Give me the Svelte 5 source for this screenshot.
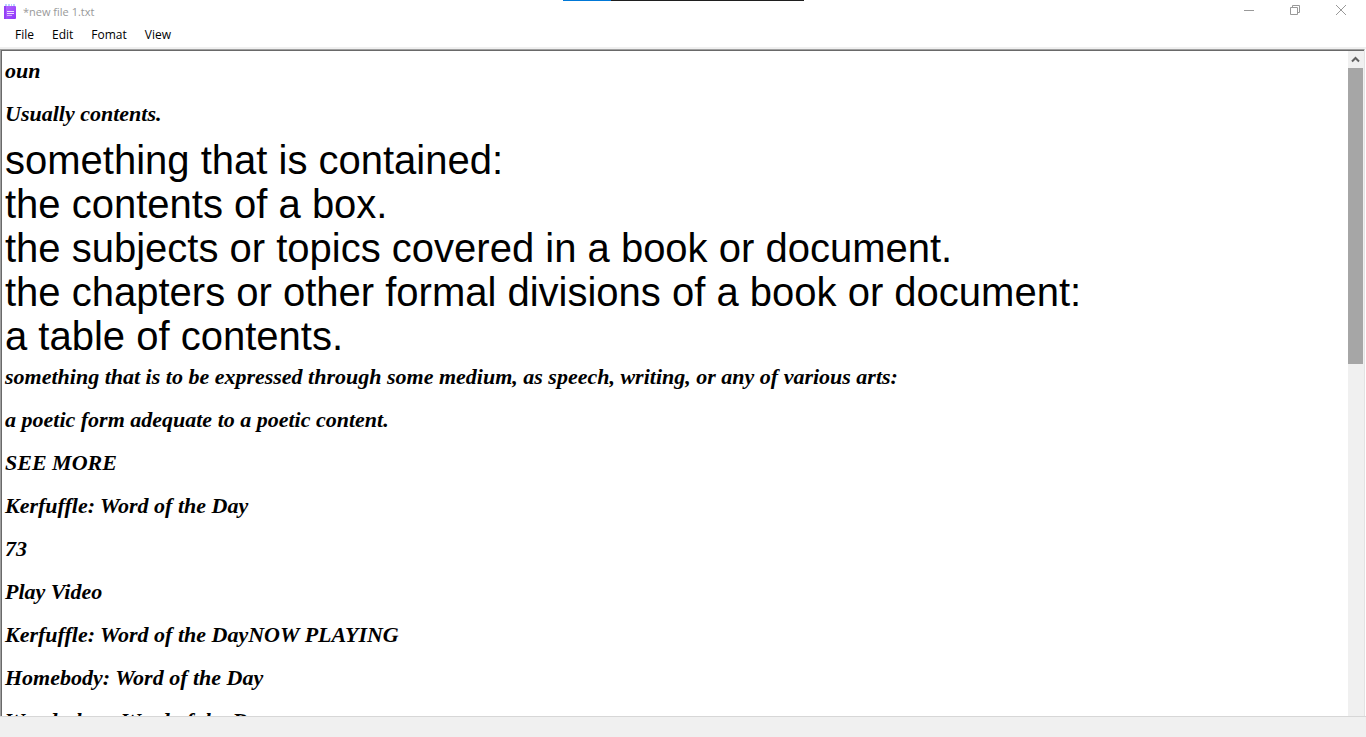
<script>
  const menus = ['File', 'Edit', 'Fomat', 'View'];
  const lines = [
    { text: 'oun' },
    { text: 'Usually contents.' },
    { text: 'something that is contained:', large: true },
    { text: 'the contents of a box.', large: true },
    { text: 'the subjects or topics covered in a book or document.', large: true },
    { text: 'the chapters or other formal divisions of a book or document:', large: true },
    { text: 'a table of contents.', large: true },
    { text: 'something that is to be expressed through some medium, as speech, writing, or any of various arts:' },
    { text: 'a poetic form adequate to a poetic content.' },
    { text: 'SEE MORE' },
    { text: 'Kerfuffle: Word of the Day' },
    { text: '73' },
    { text: 'Play Video' },
    { text: 'Kerfuffle: Word of the DayNOW PLAYING' },
    { text: 'Homebody: Word of the Day' },
    { text: 'Wanderlust: Word of the Day' }
  ];
  const thumbShare = 45.7;
</script>

<div class="window">
  <div class="progress"><span></span></div>
  <header class="titlebar">
    <svg class="logo" width="14" height="16" viewBox="0 0 14 16" aria-hidden="true">
      <defs>
        <linearGradient id="pad" x1="0" y1="0" x2="1" y2="1">
          <stop offset="0" stop-color="#b56cff" />
          <stop offset="1" stop-color="#8f35fa" />
        </linearGradient>
      </defs>
      <rect x="1" y="2" width="12" height="13" rx="1" fill="url(#pad)" />
      <rect x="1" y="2" width="2" height="13" fill="#9440f5" />
      <path d="M2 0h2v2H2zM5 0h2v2H5zM8 0h1v2H8zM10 0h2v2h-2z" fill="#b9d3ff" />
      <path d="M4 7.5h7M4 9.5h7" stroke="#efdcff" />
      <path d="M4 11.5h5" stroke="#d3a8ff" />
    </svg>
    <h1>*new file 1.txt</h1>
    <div class="controls">
      <button aria-label="Minimize"><svg width="12" height="12" viewBox="0 0 12 12"><path d="M1 6.5h10" /></svg></button>
      <button aria-label="Restore"><svg width="12" height="12" viewBox="0 0 12 12"><path d="M1.5 3.5h7v7h-7zM3.5 3.5v-2h7v7h-2" /></svg></button>
      <button aria-label="Close"><svg width="12" height="12" viewBox="0 0 12 12"><path d="M1 1l10 10M11 1L1 11" /></svg></button>
    </div>
  </header>

  <nav class="menubar" aria-label="Menu">
    {#each menus as menu}
      <button>{menu}</button>
    {/each}
  </nav>

  <main class="editor">
    <div class="document" contenteditable="true" role="textbox" aria-multiline="true" aria-label="Document text" tabindex="0" spellcheck="false">
      {#each lines as line}
        <p class:large={line.large}>{line.text}</p>
      {/each}
    </div>
    <div class="scrollbar">
      <button aria-label="Scroll up"><svg width="9" height="7" viewBox="0 0 9 7"><path d="M1 5.5l3.5-3.5L8 5.5" /></svg></button>
      <div class="track"><div class="thumb" style="height: {thumbShare}%"></div></div>
    </div>
  </main>

  <footer class="statusbar"></footer>
</div>

<style>
  :global(body) {
    margin: 0;
    background: #fff;
  }

  .window {
    display: flex;
    flex-direction: column;
    height: 100vh;
    overflow: hidden;
    background: #fff;
    color: #000;
    font-family: "Open Sans", "Noto Sans", sans-serif;
    font-size: 12px;
  }

  button {
    display: flex;
    align-items: center;
    justify-content: center;
    padding: 0;
    border: 0;
    background: none;
    color: inherit;
    font: inherit;
  }

  .progress {
    display: flex;
    flex: none;
    width: 241px;
    height: 1px;
    margin: 0 auto;
    background: #1f1f1f;
  }

  .progress span {
    width: 20%;
    background: #0078d7;
  }

  .titlebar {
    display: flex;
    flex: none;
    align-items: center;
    height: 21px;
    padding-left: 3px;
    color: #999;
  }

  .logo {
    flex: none;
    margin-right: 6px;
  }

  h1 {
    flex: 1;
    margin: 0;
    font-size: 11px;
    font-weight: 400;
    line-height: 16px;
  }

  .controls {
    display: flex;
    align-self: flex-start;
    height: 18px;
    padding-right: 2px;
  }

  .controls button {
    width: 46px;
  }

  .controls svg {
    fill: none;
    stroke: #999;
  }

  .menubar {
    display: flex;
    flex: none;
    gap: 18px;
    height: 25px;
    padding-left: 15px;
    border-bottom: 2px solid #f0f0f0;
  }

  .editor {
    display: flex;
    flex: 1;
    min-height: 0;
    margin-right: 1px;
    padding: 1px 0 0 1px;
    border: 1px solid #a0a0a0;
    border-right-color: #e3e3e3;
    border-bottom: 0;
    box-shadow: inset 1px 1px #696969;
  }

  .document {
    flex: 1;
    min-width: 0;
    padding-left: 3px;
    overflow: hidden;
    outline: none;
    font-family: "Liberation Serif", serif;
    font-size: 22px;
    font-style: italic;
    font-weight: 700;
    white-space: nowrap;
  }

  p {
    margin: 0;
    padding-bottom: 4px;
    line-height: 39px;
  }

  .large {
    padding: 2px 0 0;
    font-family: "Liberation Sans", Arial, sans-serif;
    font-size: 40px;
    font-style: normal;
    font-weight: 400;
    line-height: 42px;
  }

  .scrollbar {
    display: flex;
    flex: none;
    flex-direction: column;
    width: 15px;
    padding-right: 1px;
    background: #f0f0f0;
  }

  .scrollbar button {
    height: 17px;
  }

  .scrollbar svg {
    fill: none;
    stroke: #606060;
    stroke-width: 2;
  }

  .track {
    flex: 1;
  }

  .thumb {
    background: #a6a6a6;
  }

  .statusbar {
    flex: none;
    height: 20px;
    border-top: 1px solid #d7d7d7;
    background: #f0f0f0;
  }
</style>
